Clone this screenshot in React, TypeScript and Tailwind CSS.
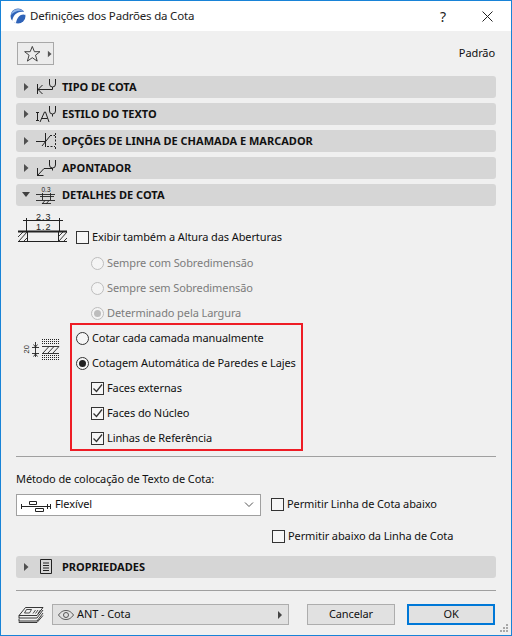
import React from 'react';

const font = { fontFamily: '"Noto Sans", sans-serif' };

const Arrow = ({ open }: { open?: boolean }) =>
	open ? (
		<svg width="12" height="10" viewBox="0 0 12 10" className="shrink-0"><path d="M1 2h8L5 7z" fill="#404040" /></svg>
	) : (
		<svg width="12" height="10" viewBox="0 0 12 10" className="shrink-0"><path d="M3 1l4.500 4L3 9z" fill="#505050" /></svg>
	);

const Fork = () => <path d="M13.500 3v5a3 3 0 0 0 6 0V3M16.500 11v2.500" fill="none" stroke="#222" />;

const TipoIcon = () => (
	<svg width="24" height="22" viewBox="0 0 24 22" fill="none" stroke="#222">
		<path d="M1.500 8v10M2 13.500h14.500M6.500 9l-4.500 4.500 4.500 4.500" />
		<Fork />
	</svg>
);

const EstiloIcon = () => (
	<svg width="24" height="22" viewBox="0 0 24 22" fill="none" stroke="#222">
		<path d="M1.500 9v9M0 9.500h3M0 17.500h3M4 19l4.500-10h1L13 19M5.500 15.500h6" />
		<Fork />
	</svg>
);

const OpcoesIcon = () => (
	<svg width="24" height="22" viewBox="0 0 24 22" fill="none" stroke="#222">
		<path d="M0 11.500h9M9.500 3v14M6 16l8-10" />
		<path d="M14 5.500h5M19.500 6v10M11 16.500h8" strokeDasharray="2 1.500" />
		<path d="M19.500 3v2M19.500 17v2" />
	</svg>
);

const ApontadorIcon = () => (
	<svg width="24" height="22" viewBox="0 0 24 22" fill="none" stroke="#222">
		<path d="M1.500 11v8M1.500 18.500l6.500-7h8.500M1.500 18.500h6" />
		<Fork />
	</svg>
);

const DetalhesIcon = () => (
	<svg width="24" height="22" viewBox="0 0 24 22" fill="none" stroke="#222">
		<text x="5.500" y="8" fontSize="6.500" fill="#222" stroke="none" fontFamily="Liberation Sans, sans-serif">0.3</text>
		<path d="M6.500 9v7M14.500 9v7M0 10.500h19M4 12.500h14M0 16.500h19M6 20l3-3.500M10 20l3-3.500M6 19.500h9" strokeWidth="0.9" />
	</svg>
);

const PropsIcon = () => (
	<svg width="14" height="16" viewBox="0 0 14 16" fill="none" stroke="#222">
		<path d="M.500.500h11v14h-11zM3 4h6M3 6.500h6M3 9h6M3 11.500h6" />
	</svg>
);

const Section = ({ label, icon, open, indent }: { label: string; icon: React.ReactNode; open?: boolean; indent?: boolean }) => (
	<div className="flex h-[22px] items-center rounded-[3px] bg-[#d6d6d6] pl-[5px]">
		<Arrow open={open} />
		<span className={indent ? 'ml-[7px] flex w-[22px] shrink-0' : 'ml-[3px] flex w-[26px] shrink-0'}>{icon}</span>
		<span className="text-[11px] font-bold text-[#111]">{label}</span>
	</div>
);

const Check = ({ checked }: { checked?: boolean }) => (
	<span className="flex h-[13px] w-[13px] shrink-0 items-center justify-center border border-[#333] bg-[#f6f6f6]">
		{checked && (
			<svg width="11" height="11" viewBox="0 0 11 11" fill="none" stroke="#333" strokeWidth="1.300"><path d="M1.500 5.500l3 3 5.500-7" /></svg>
		)}
	</span>
);

const Radio = ({ checked, disabled }: { checked?: boolean; disabled?: boolean }) => (
	<span className={`flex h-[13px] w-[13px] shrink-0 items-center justify-center rounded-full border ${disabled ? 'border-[#bdbdbd] bg-[#f4f4f4]' : 'border-[#333] bg-[#f6f6f6]'}`}>
		{checked && <span className={`h-[7px] w-[7px] rounded-full ${disabled ? 'bg-[#bdbdbd]' : 'bg-[#222]'}`} />}
	</span>
);

const Row = ({ control, label, disabled, indent }: { control: React.ReactNode; label: string; disabled?: boolean; indent?: boolean }) => (
	<div className={`flex h-[25px] items-center gap-[3px] whitespace-nowrap text-[11px] tracking-[-0.1px] ${indent ? 'pl-[15px]' : ''} ${disabled ? 'text-[#7c7c7c]' : 'text-[#111]'}`}>
		{control}
		<span>{label}</span>
	</div>
);

const OpeningIcon = () => (
	<svg width="50" height="30" viewBox="0 0 50 30" fill="none" stroke="#222" className="shrink-0">
		<text x="18" y="8" fontSize="9" fill="#222" stroke="none" fontFamily="Liberation Sans, sans-serif" letterSpacing="1">2.3</text>
		<text x="18" y="18" fontSize="9" fill="#222" stroke="none" fontFamily="Liberation Sans, sans-serif" letterSpacing="1">1.2</text>
		<path d="M8.500 6v13M41.500 6v13M5 8.500h40" />
		<path d="M0 19.500h49" strokeWidth="2" />
		<path d="M0 29.500h49M9.500 20v10M40.500 20v10" />
		<path d="M0 25l5-5M1 29l8-9M6 29l3-3M40 25l5-5M41 29l8-9M46 29l3-3" strokeWidth="0.9" />
	</svg>
);

const LayerThicknessIcon = () => (
	<svg width="40" height="24" viewBox="0 0 40 24" fill="none" stroke="#222" className="shrink-0">
		<text x="0" y="0" transform="translate(7 15.500) rotate(-90)" fontSize="7.500" fill="#222" stroke="none" fontFamily="Liberation Sans, sans-serif">20</text>
		<path d="M13.500 4v15M10 9.500h7M10 15.500h7M11.500 6.500l2 2.500 2-2.500M11.500 18.500l2-2.500 2 2.500" strokeWidth="0.9" />
		<path d="M20 1.500h17M20 3.500h17M20 5.500h17M20 17.500h17M20 19.500h17M20 21.500h17" strokeDasharray="1 1" />
		<path d="M20 8.500h17M20 15.500h17M21 15l6-6.500M26 15l6-6.500M31 15l6-6.500" strokeWidth="0.9" />
	</svg>
);

const FlexIcon = () => (
	<svg width="32" height="14" viewBox="0 0 32 14" fill="none" stroke="#222" className="shrink-0">
		<path d="M1 8.500h30M1.500 6v5M27.500 6v5M30.500 6v5" />
		<path d="M9.500 3.500h7v3h-7zM15.500 10.500h8v3h-8z" fill="#fff" />
	</svg>
);

const LayerIcon = () => (
	<svg width="26" height="18" viewBox="0 0 26 18" fill="none" stroke="#222" className="shrink-0">
		<path d="M1 9.500L7.500 1.500h17.500l-6 8zM1 9.500v2.500l0 0h18l6-8M1 12.500v2.500h18l6-8M1 15.500v1h18l6-7" strokeWidth="0.9" />
		<path d="M8.500 3.500h5l-2 3.500h-5zM15 7.500l2.500-3.500M17.500 7.500l2.500-3.500M20 7.500l2.500-3.500" strokeWidth="0.8" />
	</svg>
);

const EyeIcon = () => (
	<svg width="16" height="10" viewBox="0 0 16 10" fill="none" stroke="#555">
		<path d="M.500 5C3 1.500 5.500.500 8 .500S13 1.500 15.500 5C13 8.500 10.500 9.500 8 9.500S3 8.500.500 5z" />
		<circle cx="8" cy="5" r="2.500" />
	</svg>
);

const Button = ({ label, primary }: { label: string; primary?: boolean }) => (
	<button className={`flex h-[21px] w-[88px] items-center justify-center bg-[#e1e1e1] text-[11px] tracking-[-0.1px] text-[#111] ${primary ? 'border-2 border-[#0078d7]' : 'border border-[#adadad]'}`}>
		{label}
	</button>
);

export default function App() {
	return (
		<div style={font} className="relative flex h-[636px] w-[512px] flex-col border border-[#1883d7] bg-[#f0f0f0]">
			<div className="flex h-[30px] shrink-0 items-center bg-white pl-[9px]">
				<svg width="16" height="16" viewBox="0 0 16 16">
					<circle cx="8" cy="8" r="7.500" fill="#2f63b8" />
					<path d="M2 14C3 7 7 2.500 15 4l.5 3C12 5 7 8 6 15z" fill="#fff" />
					<path d="M1 7c.5-3 3-6 7-6 2.500 0 4 1 5 2C8 2 3.500 4 1 7z" fill="#8fb4e8" />
				</svg>
				<span className="ml-[4px] text-[11.500px] tracking-[-0.2px] text-[#222]">Definições dos Padrões da Cota</span>
				<span className="ml-auto mr-[36px] text-[14px] text-[#222]">?</span>
				<svg width="11" height="11" viewBox="0 0 11 11" className="mr-[18px]" stroke="#222"><path d="M.500.500l10 10M10.500.500l-10 10" /></svg>
			</div>
			<div className="flex flex-1 flex-col px-[15px]">
				<div className="mt-[11px] flex h-[23px] items-center justify-between">
					<div className="ml-[1px] flex h-[23px] w-[37px] items-center border border-[#a8a8a8] bg-[#ececec] pl-[6px]">
						<svg width="18" height="18" viewBox="0 0 18 18" fill="none" stroke="#333"><path d="M9 .800l2.300 5.700h6l-4.800 3.800 1.800 6.400L9 13l-5.300 3.700 1.800-6.400L.700 6.500h6z" /></svg>
						<svg width="8" height="10" viewBox="0 0 8 10" className="ml-[5px]"><path d="M2 1.500l4 3.500-4 3.500z" fill="#555" /></svg>
					</div>
					<span className="mr-[1px] text-[11px] tracking-[-0.1px] text-[#111]">Padrão</span>
				</div>

				<div className="mt-[11px] flex flex-col gap-[5px]">
					<Section label="TIPO DE COTA" icon={<TipoIcon />} />
					<Section label="ESTILO DO TEXTO" icon={<EstiloIcon />} />
					<Section label="OPÇÕES DE LINHA DE CHAMADA E MARCADOR" icon={<OpcoesIcon />} />
					<Section label="APONTADOR" icon={<ApontadorIcon />} />
					<Section label="DETALHES DE COTA" icon={<DetalhesIcon />} open />
				</div>

				<div className="mt-[6px] flex h-[38px] items-start pl-[2px]">
					<OpeningIcon />
					<div className="ml-[8px] mt-[13px]"><Row control={<Check />} label="Exibir também a Altura das Aberturas" /></div>
				</div>
				<div className="mt-[1px] pl-[75px]">
					<Row control={<Radio disabled />} label="Sempre com Sobredimensão" disabled />
					<Row control={<Radio disabled />} label="Sempre sem Sobredimensão" disabled />
					<Row control={<Radio disabled checked />} label="Determinado pela Largura" disabled />
				</div>

				<div className="flex">
					<div className="ml-[6px] mt-[12px] w-[48px]"><LayerThicknessIcon /></div>
					<div className="-mt-[3px] h-[128px] w-[233px] border-2 border-[#ee1c25] pl-[4px] pt-[1px]">
						<Row control={<Radio />} label="Cotar cada camada manualmente" />
						<Row control={<Radio checked />} label="Cotagem Automática de Paredes e Lajes" />
						<Row control={<Check checked />} label="Faces externas" indent />
						<Row control={<Check checked />} label="Faces do Núcleo" indent />
						<Row control={<Check checked />} label="Linhas de Referência" indent />
					</div>
				</div>

				<div className="mt-[5px] h-px bg-[#a0a0a0]" />
				<div className="mt-[14px] h-[15px] text-[11px] leading-[15px] tracking-[-0.1px] text-[#111]">Método de colocação de Texto de Cota:</div>
				<div className="mt-[6px] flex items-center">
					<div className="flex h-[22px] w-[245px] items-center border border-[#a0a0a0] bg-white pl-[3px] pr-[6px] text-[11px] tracking-[-0.1px] text-[#111]">
						<FlexIcon />
						<span className="ml-[3px]">Flexível</span>
						<svg width="10" height="6" viewBox="0 0 10 6" fill="none" stroke="#555" className="ml-auto"><path d="M1 .500l4 4 4-4" /></svg>
					</div>
					<div className="ml-[10px]"><Row control={<Check />} label="Permitir Linha de Cota abaixo" /></div>
				</div>
				<div className="mt-[7px] pl-[256px]"><Row control={<Check />} label="Permitir abaixo da Linha de Cota" /></div>
				<div className="mt-[7px]"><Section label="PROPRIEDADES" icon={<PropsIcon />} indent /></div>
				<div className="mt-[12px] h-px bg-[#a0a0a0]" />

				<div className="mt-[13px] flex items-center">
					<div className="ml-[2px] w-[34px]"><LayerIcon /></div>
					<div className="flex h-[21px] w-[237px] items-center border border-[#adadad] bg-[#e1e1e1] pl-[5px] pr-[5px] text-[11px] tracking-[-0.1px] text-[#111]">
						<EyeIcon />
						<span className="ml-[3px]">ANT - Cota</span>
						<svg width="6" height="10" viewBox="0 0 6 10" className="ml-auto"><path d="M1 1l4 4-4 4z" fill="#444" /></svg>
					</div>
					<div className="ml-[18px]"><Button label="Cancelar" /></div>
					<div className="ml-[12px]"><Button label="OK" primary /></div>
				</div>
			</div>
			<svg width="9" height="9" viewBox="0 0 9 9" fill="#a8a8a8" className="absolute bottom-[2px] right-[2px]">
				<path d="M6 0h2v2H6zM3 3h2v2H3zM6 3h2v2H6zM0 6h2v2H0zM3 6h2v2H3zM6 6h2v2H6z" />
			</svg>
		</div>
	);
}
